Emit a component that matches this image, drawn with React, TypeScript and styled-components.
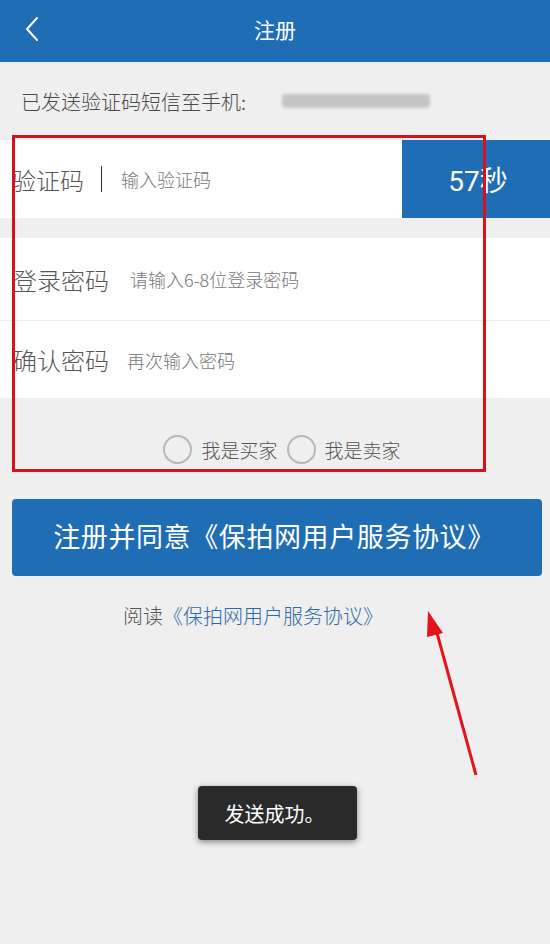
import { createGlobalStyle, styled } from "styled-components";

const BLUE = "#1f6db5";

const GlobalStyle = createGlobalStyle`
  body {
    margin: 0;
    background: #efefef;
    font-family: "Noto Sans CJK SC", "Noto Sans", sans-serif;
    font-weight: 300;
  }
`;

export default function App() {
  return (
    <Page>
      <GlobalStyle />
      <Header>
        <BackButton>
          <svg width="24" height="30" viewBox="0 0 24 30">
            <polyline
              points="13,4 3,15 13,26"
              fill="none"
              stroke="#fff"
              strokeWidth="2"
              strokeLinecap="round"
              strokeLinejoin="round"
            />
          </svg>
        </BackButton>
        <Title>注册</Title>
        <span />
      </Header>

      <Notice>
        已发送验证码短信至手机:
        <Blurred />
      </Notice>

      <CodeRow>
        <CodeField>
          <Label>验证码</Label>
          <Divider />
          <Input placeholder="输入验证码" $gap={19} />
        </CodeField>
        <Countdown>57秒</Countdown>
      </CodeRow>

      <FieldGroup>
        <FieldRow $height={82} $border>
          <Label>登录密码</Label>
          <Input placeholder="请输入6-8位登录密码" $gap={21} type="password" />
        </FieldRow>
        <FieldRow $height={77}>
          <Label>确认密码</Label>
          <Input placeholder="再次输入密码" $gap={18} type="password" />
        </FieldRow>
      </FieldGroup>

      <RoleRow>
        <Role>
          <Radio />
          我是买家
        </Role>
        <Role>
          <Radio />
          我是卖家
        </Role>
      </RoleRow>

      <SubmitButton>注册并同意《保拍网用户服务协议》</SubmitButton>

      <Agreement>
        阅读<AgreementLink>《保拍网用户服务协议》</AgreementLink>
      </Agreement>

      {/* annotation overlay */}
      <Highlight />
      <Arrow width="60" height="175" viewBox="0 0 60 175">
        <line x1="54" y1="168" x2="15" y2="26" stroke="#e3141c" strokeWidth="3" />
        <polygon points="6,4 21,26 5,30" fill="#e3141c" />
      </Arrow>

      <Toast>发送成功。</Toast>
    </Page>
  );
}

const Page = styled.div`
  position: relative;
  width: 550px;
  min-height: 944px;
  overflow: hidden;
  background: #efefef;
`;

const Header = styled.div`
  display: grid;
  grid-template-columns: 60px 1fr 60px;
  align-items: center;
  height: 62px;
  background: ${BLUE};
`;

const BackButton = styled.div`
  display: flex;
  align-items: center;
  padding-left: 24px;
  height: 100%;
  margin-top: -4px;
`;

const Title = styled.div`
  text-align: center;
  color: #fff;
  font-size: 21px;
  font-weight: 400;
  margin-top: -5px;
`;

const Notice = styled.div`
  display: flex;
  align-items: center;
  height: 78px;
  padding-left: 21px;
  font-size: 20px;
  color: #4a4a4a;
`;

const Blurred = styled.span`
  display: inline-block;
  width: 148px;
  height: 14px;
  margin-left: 36px;
  border-radius: 4px;
  background: #c4c4c4;
  filter: blur(1.5px);
`;

const CodeRow = styled.div`
  display: flex;
  height: 78px;
`;

const CodeField = styled.div`
  flex: 1;
  display: flex;
  align-items: center;
  padding-left: 12px;
  background: #fff;
`;

const Label = styled.span`
  flex: none;
  font-size: 24px;
  color: #555;
`;

const Divider = styled.span`
  width: 1px;
  height: 26px;
  margin-left: 17px;
  background: #333;
`;

const Input = styled.input<{ $gap: number }>`
  flex: 1;
  min-width: 0;
  margin-left: ${(p) => p.$gap}px;
  border: none;
  outline: none;
  background: transparent;
  font-family: "Noto Sans CJK SC", sans-serif;
  font-weight: 300;
  font-size: 18px;
  color: #333;
  padding: 0;

  &::placeholder {
    color: #777;
  }
`;

const Countdown = styled.div`
  flex: none;
  box-sizing: border-box;
  width: 148px;
  display: flex;
  align-items: center;
  justify-content: center;
  background: ${BLUE};
  color: #fff;
  font-family: "Roboto", "Noto Sans CJK SC", sans-serif;
  font-weight: 400;
  font-size: 28px;
  padding-left: 4px;
`;

const FieldGroup = styled.div`
  margin-top: 20px;
  background: #fff;
`;

const FieldRow = styled.div<{ $height: number; $border?: boolean }>`
  display: flex;
  align-items: center;
  height: ${(p) => p.$height}px;
  padding-left: 13px;
  border-bottom: ${(p) => (p.$border ? "1px solid #ececec" : "none")};
`;

const RoleRow = styled.div`
  display: flex;
  justify-content: center;
  gap: 9px;
  height: 101px;
  padding: 37px 0 0 14px;
  box-sizing: border-box;
`;

const Role = styled.label`
  display: flex;
  align-items: center;
  gap: 9px;
  height: 28px;
  font-size: 19px;
  color: #555;
`;

const Radio = styled.span`
  width: 25px;
  height: 25px;
  border: 2px solid #b8b8b8;
  border-radius: 50%;
`;

const SubmitButton = styled.button`
  display: block;
  width: 530px;
  height: 77px;
  margin: 0 0 0 12px;
  border: none;
  border-radius: 4px;
  background: ${BLUE};
  color: #fff;
  font-family: "Noto Sans CJK SC", sans-serif;
  font-weight: 400;
  font-size: 27px;
  letter-spacing: 0.6px;
  padding: 0 6px 4px 0;
`;

const Agreement = styled.div`
  padding: 25px 0 0 123px;
  font-size: 20px;
  color: #555;
`;

const AgreementLink = styled.span`
  color: #2d6aa6;
`;

const Highlight = styled.div`
  position: absolute;
  left: 12px;
  top: 135px;
  width: 468px;
  height: 331px;
  border: 3px solid #d6121a;
  pointer-events: none;
`;

const Arrow = styled.svg`
  position: absolute;
  left: 422px;
  top: 607px;
`;

const Toast = styled.div`
  position: absolute;
  left: 198px;
  top: 786px;
  width: 159px;
  height: 54px;
  display: flex;
  align-items: center;
  justify-content: center;
  border-radius: 4px;
  background: #2a2a2a;
  box-shadow: 0 2px 6px rgba(0, 0, 0, 0.45);
  color: #fff;
  font-size: 20px;
  font-weight: 400;
  padding-right: 6px;
  box-sizing: border-box;
`;
